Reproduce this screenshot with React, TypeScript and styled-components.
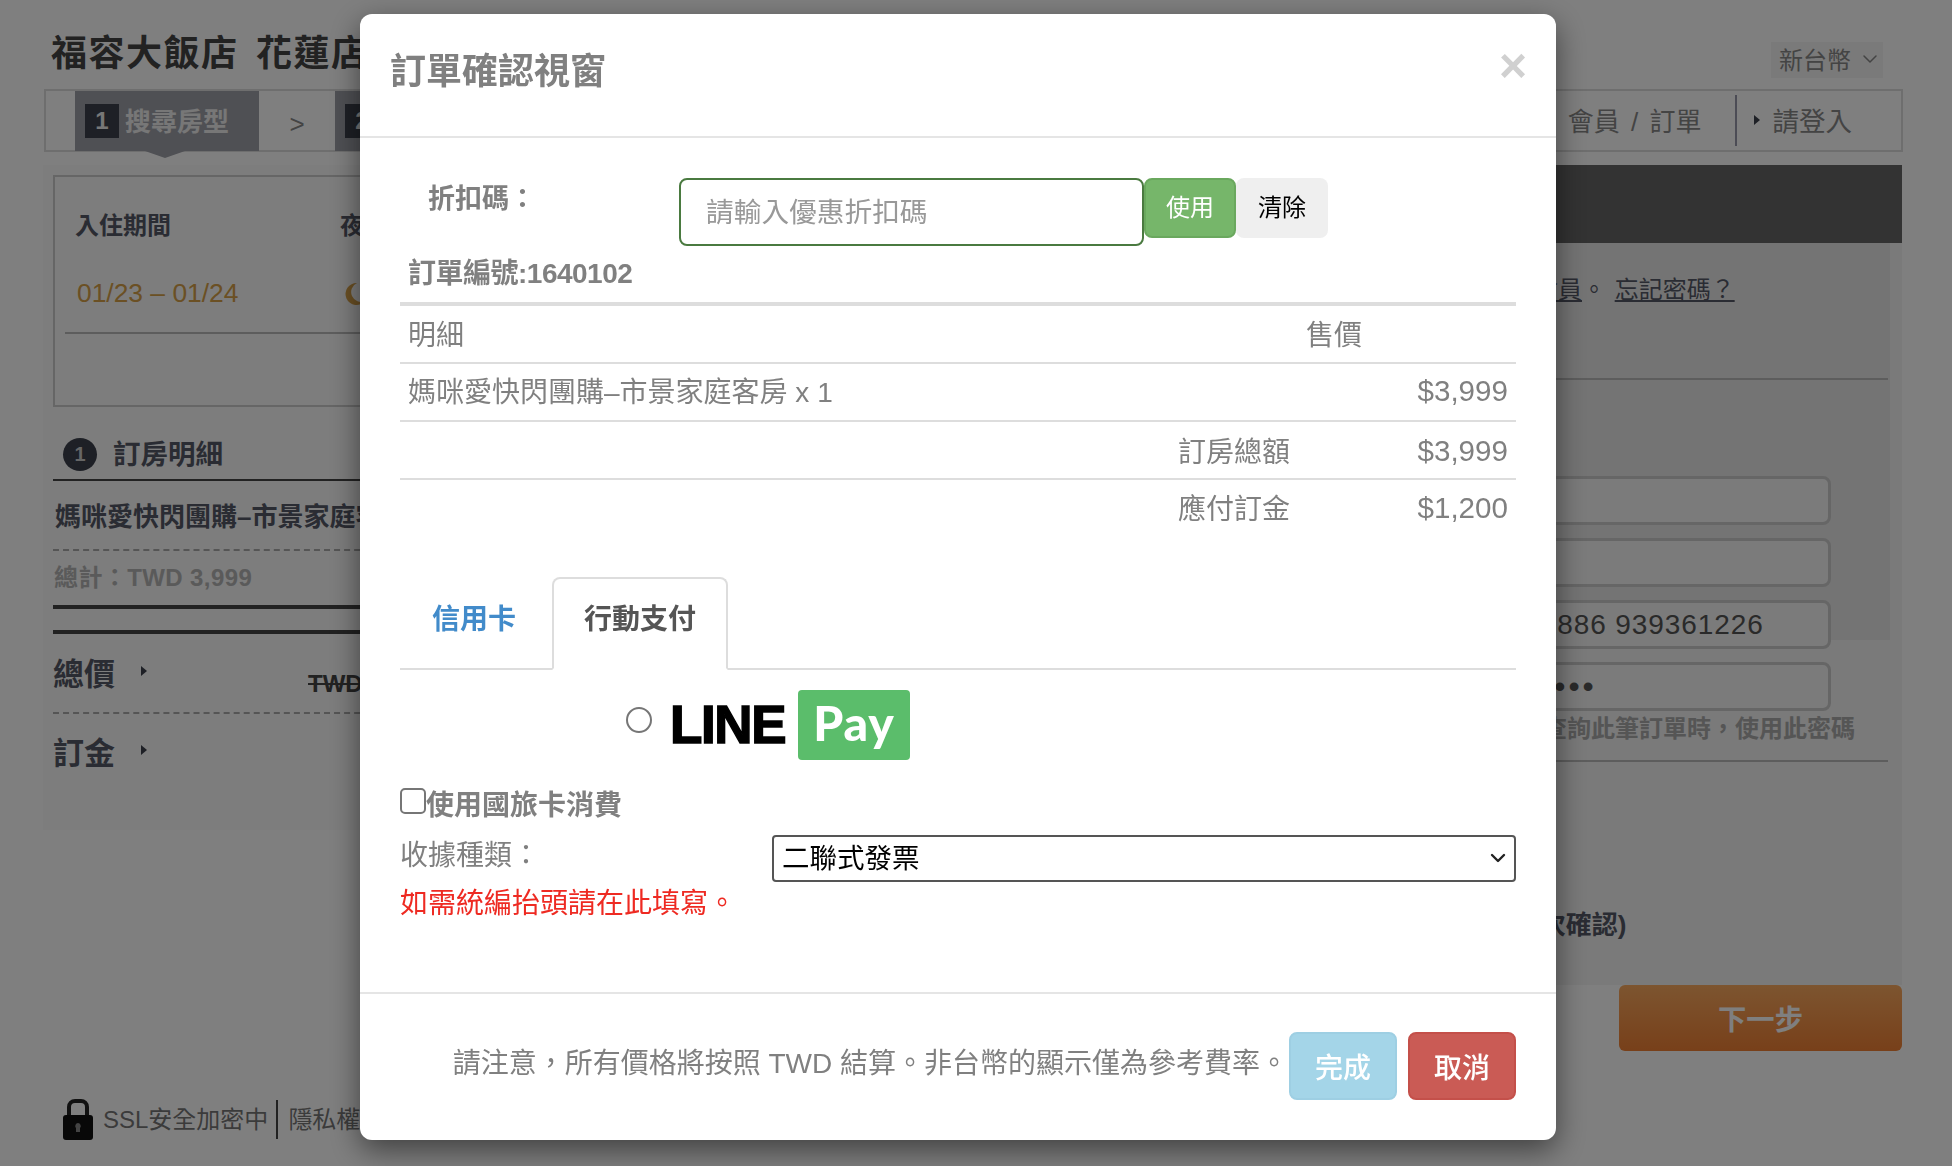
import * as React from 'react';
import styled, { createGlobalStyle } from 'styled-components';
import { ChevronDown } from 'lucide-react';

const FONT = '"Liberation Sans", "Noto Sans CJK TC", sans-serif';

const GlobalStyle = createGlobalStyle`
  html, body {
    margin: 0;
    padding: 0;
    height: 1166px;
    overflow: hidden;
    background: #fff;
    font-family: ${FONT};
  }
  * {
    box-sizing: border-box;
  }
`;

/* page behind the dialog */
const Page = styled.div`
  width: 1952px;
  height: 1166px;
  padding: 0 49px 0 44px;
  color: #555866;
`;

const TitleRow = styled.div`
  display: flex;
  justify-content: space-between;
  align-items: flex-start;
  height: 89px;
  padding: 33px 20px 0 7px;
`;

const HotelTitle = styled.h1`
  margin: 0;
  font-size: 36px;
  line-height: 42px;
  font-weight: 700;
  letter-spacing: 1.5px;
  word-spacing: 6px;
  color: #444;
`;

const Currency = styled.div`
  display: flex;
  align-items: center;
  gap: 7px;
  width: 112px;
  height: 36px;
  margin-top: 9px;
  padding: 0 0 3px 8px;
  background: #f4f4f4;
  color: #888;
  font-size: 24px;
`;

const StepBar = styled.div`
  display: flex;
  justify-content: space-between;
  height: 63px;
  border: 2px solid #ddd;
  padding-left: 29px;
`;

const Steps = styled.div`
  display: flex;
`;

const Step = styled.div`
  position: relative;
  display: flex;
  align-items: center;
  gap: 6px;
  width: 184px;
  height: 60px;
  padding-left: 10px;
  background: #9ea0a8;
  color: #eee;
  font-size: 26px;
  font-weight: 700;

  &:first-child::after {
    content: '';
    position: absolute;
    left: 70px;
    top: 60px;
    border-left: 20px solid transparent;
    border-right: 20px solid transparent;
    border-top: 7px solid #9ea0a8;
  }
`;

const StepNo = styled.span`
  display: flex;
  align-items: center;
  justify-content: center;
  width: 34px;
  height: 34px;
  background: #3c404c;
  color: #eee;
  font-size: 24px;
`;

const StepText = styled.span`
  margin-top: -3px;
`;

const StepArrow = styled.span`
  width: 76px;
  padding-top: 18px;
  text-align: center;
  font-size: 26px;
  color: #888;
`;

const NavLinks = styled.div`
  display: flex;
  align-items: center;
  color: #888;
  font-size: 26px;
`;

const NavLink = styled.span`
  display: flex;
  align-items: center;
  height: 51px;
  padding: 0 33px 2px 0;
  word-spacing: 4px;
`;

const NavLogin = styled(NavLink)`
  gap: 13px;
  padding: 0 49px 2px 17px;
  border-left: 2px solid #99a;
  font-size: 26.5px;
`;

const Arrow = styled.i`
  display: block;
  width: 0;
  height: 0;
  border-top: 5px solid transparent;
  border-bottom: 5px solid transparent;
  border-left: 6px solid #3c404c;
`;

const Columns = styled.div`
  display: grid;
  grid-template-columns: 1100px 759px;
  margin-top: 13px;
  margin-left: -1px;
`;

const LeftPanel = styled.div`
  height: 665px;
  padding: 10px 0 0 10px;
  background: #fafafa;
`;

const StayBox = styled.div`
  height: 232px;
  padding: 28px 0 0 10px;
  border: 2px solid #ccc;
`;

const StayGrid = styled.div`
  display: grid;
  grid-template-columns: 265px 1fr;
  grid-auto-rows: 54px;
  padding: 1px 0 18px 10px;
  border-bottom: 2px solid #bbb;
`;

const StayLabel = styled.div`
  font-size: 24px;
  line-height: 40px;
  font-weight: 700;
`;

const StayValue = styled.div`
  display: flex;
  gap: 6px;
  padding: 13px 0 0 2px;
  font-size: 26.4px;
  line-height: 40px;
  color: #d6a048;

  svg {
    margin-top: 8px;
  }
`;

const Details = styled.div`
  margin-top: 30px;
`;

const DetailsHead = styled.div`
  display: flex;
  align-items: center;
  gap: 16px;
  height: 44px;
  padding: 0 0 12px 10px;
  border-bottom: 2px solid #444;
  font-size: 27.5px;
  font-weight: 700;
`;

const RoundNo = styled.span`
  display: flex;
  align-items: center;
  justify-content: center;
  width: 34px;
  height: 33px;
  margin-top: 5px;
  border-radius: 50%;
  background: #3c404c;
  color: #ccc;
  font-size: 20px;
`;

const RoomName = styled.div`
  height: 70px;
  padding-left: 2px;
  border-bottom: 2px dashed #aaa;
  font-size: 26px;
  line-height: 72px;
  font-weight: 700;
  white-space: nowrap;
`;

const RoomTotal = styled.div`
  height: 58px;
  border-bottom: 4px solid #444;
  font-size: 24px;
  line-height: 54px;
  font-weight: 700;
  letter-spacing: 0.4px;
  color: #b4b4b4;
  padding-left: 1px;
`;

const PriceHead = styled.div`
  margin-top: 21px;
  border-top: 4px solid #444;
`;

const PriceRow = styled.div<{ $dashed?: boolean }>`
  display: flex;
  align-items: center;
  height: 80px;
  padding-bottom: ${p => (p.$dashed ? '4px' : '8px')};
  border-bottom: ${p => (p.$dashed ? '2px dashed #aaa' : 'none')};
  font-size: 31px;
  font-weight: 700;
`;

const PriceArrow = styled(Arrow)`
  margin-left: 26px;
`;

const OldPrice = styled.s`
  margin: 26px 0 0 161px;
  font-size: 24px;
  color: #444;
`;

const RightColumn = styled.div`
  display: flex;
  flex-direction: column;
`;

const DarkBar = styled.div`
  height: 78px;
  background: #666;
`;

const LoginPanel = styled.div`
  height: 742px;
  padding: 27px 14px 0 386px;
  background:
    linear-gradient(#e9e9e9, #e9e9e9) no-repeat left top / calc(100% - 12px) 397px,
    #f4f4f4;
  font-size: 24px;
  color: #555866;
`;

const LoginHint = styled.div`
  margin-left: -45px;
  padding-bottom: 68px;
  line-height: 40px;
  border-bottom: 2px solid #bbb;
  white-space: nowrap;

  u {
    margin-left: 2px;
  }
`;

const LoginFields = styled.div`
  display: grid;
  gap: 13px;
  width: 302px;
  margin-top: 96px;
`;

const LoginInput = styled.input`
  height: 49px;
  width: 100%;
  padding: 0 0 0 8px;
  border: 3px solid #ccc;
  border-radius: 8px;
  background: #f6f6f6;
  font-family: ${FONT};
  font-size: 28px;
  letter-spacing: 0.9px;
  color: #555;

  &[type='password'] {
    font-size: 32px;
    letter-spacing: 3px;
  }
`;

const LoginNote = styled.div`
  height: 51px;
  padding-left: 14px;
  border-bottom: 2px solid #bbb;
  font-size: 24px;
  line-height: 36px;
  font-weight: 700;
  color: #aaa;
  white-space: nowrap;
`;

const ConfirmNote = styled.div`
  margin: 143px 0 0 -50px;
  font-size: 26px;
  line-height: 40px;
  font-weight: 700;
  white-space: nowrap;
`;

const NextButton = styled.div`
  align-self: flex-end;
  width: 283px;
  height: 66px;
  border-radius: 6px;
  background: linear-gradient(#faaa60, #f08034);
  color: #fff;
  font-size: 28.3px;
  font-weight: 700;
  line-height: 70px;
  text-align: center;
`;

const FootRow = styled.div`
  display: flex;
  align-items: center;
  margin-top: 46px;
  padding-left: 19px;
  color: #777;
  font-size: 24px;
`;

const LockIcon = styled.svg`
  width: 30px;
  height: 44px;
  margin-right: 10px;
`;

const FootLink = styled.span`
  padding: 0 8px 4px 0;

  & + & {
    padding-left: 10px;
    border-left: 2px solid #444;
  }
`;

/* dialog */
const Backdrop = styled.div`
  position: fixed;
  inset: 0;
  background: rgba(0, 0, 0, 0.5);
`;

const Dialog = styled.div`
  display: flex;
  flex-direction: column;
  width: 1196px;
  height: 1126px;
  margin: 14px 0 0 360px;
  border-radius: 12px;
  background: #fff;
  box-shadow: 0 10px 30px rgba(0, 0, 0, 0.5);
  color: #808080;
  font-size: 28px;
`;

const DialogHeader = styled.div`
  display: flex;
  justify-content: space-between;
  height: 124px;
  padding: 32px 29px 0 30px;
  border-bottom: 2px solid #e5e5e5;
`;

const DialogTitle = styled.h4`
  margin: 0;
  font-size: 36px;
  line-height: 52px;
  font-weight: 700;
`;

const CloseButton = styled.span`
  margin-top: -6px;
  font-size: 48px;
  line-height: 52px;
  font-weight: 700;
  color: #d0d0d0;
`;

const DialogBody = styled.div`
  flex: 1;
  padding: 40px 40px 0;
`;

const CouponRow = styled.div`
  display: flex;
  align-items: flex-start;
  height: 68px;
`;

const CouponLabel = styled.div`
  width: 279px;
  padding: 1px 0 0 28px;
  font-size: 27px;
  line-height: 40px;
  font-weight: 700;
`;

const CouponInput = styled.input`
  width: 465px;
  height: 68px;
  padding: 2px 25px 0;
  border: 2px solid #4a7a40;
  border-radius: 8px;
  outline: none;
  font-family: ${FONT};
  font-size: 27.7px;

  &::placeholder {
    color: #999;
  }
`;

const CouponButton = styled.button<{ $apply?: boolean }>`
  width: 92px;
  height: 60px;
  padding: 0 0 5px;
  border: ${p => (p.$apply ? '2px solid #6aa85e' : 'none')};
  border-radius: 8px;
  background: ${p => (p.$apply ? '#76b66a' : '#efefef')};
  color: ${p => (p.$apply ? '#fff' : '#000')};
  font-family: ${FONT};
  font-size: 24px;
`;

const OrderNo = styled.div`
  height: 56px;
  padding-left: 8px;
  font-size: 28px;
  line-height: 56px;
  font-weight: 700;
  letter-spacing: -0.5px;
`;

const SummaryTable = styled.table`
  width: 100%;
  margin-bottom: 40px;
  border-collapse: collapse;
  border-top: 4px solid #ddd;

  th,
  td {
    height: 58px;
    padding: 0 8px;
    border-top: 2px solid #ddd;
    font-size: 28px;
    font-weight: 400;
    text-align: left;
    white-space: nowrap;
  }

  tr:first-child th {
    height: 59px;
    padding-bottom: 2px;
    border-top: none;
  }

  tr:nth-child(2n) td {
    padding-bottom: 4px;
  }
`;

const TotalHeadCell = styled.th`
  width: 128px;
`;

const PriceHeadCell = styled.th`
  width: 218px;
`;

const AmountCell = styled.td`
  && {
    padding-top: 2px;
    font-size: 29.6px;
    text-align: right;
  }
`;

const Tabs = styled.div`
  display: flex;
  align-items: flex-end;
  height: 93px;
  border-bottom: 2px solid #ddd;
`;

const Tab = styled.div<{ $active?: boolean }>`
  height: ${p => (p.$active ? '93px' : '91px')};
  margin: 0 ${p => (p.$active ? '0' : '4px')} ${p => (p.$active ? '-2px' : '0')} 0;
  padding: 21px 30px 0;
  border: 2px solid ${p => (p.$active ? '#ddd' : 'transparent')};
  border-bottom-color: ${p => (p.$active ? '#fff' : 'transparent')};
  border-radius: 8px 8px 0 0;
  background: #fff;
  color: ${p => (p.$active ? '#555' : '#428bca')};
  font-size: 28px;
  line-height: 40px;
  font-weight: 700;
`;

const PayRow = styled.label`
  display: flex;
  align-items: center;
  gap: 18px;
  height: 70px;
  margin: 20px 0 30px;
  padding-left: 226px;
`;

const Radio = styled.input`
  appearance: none;
  flex: none;
  width: 26px;
  height: 26px;
  margin: -10px 0 0;
  border: 2px solid #767676;
  border-radius: 50%;
  background: #fff;
`;

const LineLogo = styled.span`
  display: flex;
  align-items: center;
  gap: 13px;
`;

const LineWord = styled.span`
  width: 115px;
  font-size: 53px;
  line-height: 70px;
  font-weight: 700;
  letter-spacing: -1.4px;
  color: #000;
  -webkit-text-stroke: 1.5px #000;
  white-space: nowrap;
`;

const PayWord = styled.span`
  width: 112px;
  height: 70px;
  border-radius: 4px;
  background: #5bbd6b;
  color: #fff;
  font-family: Lato, sans-serif;
  font-size: 48px;
  line-height: 66px;
  font-weight: 900;
  letter-spacing: 1px;
  text-align: center;
`;

const TravelCard = styled.label`
  display: flex;
  align-items: center;
  height: 32px;
  font-weight: 700;
  line-height: 32px;
`;

const Checkbox = styled.input`
  appearance: none;
  flex: none;
  width: 26px;
  height: 26px;
  margin: -11px 0 0;
  border: 2px solid #767676;
  border-radius: 5px;
  background: #fff;
`;

const ReceiptRow = styled.div`
  display: flex;
  margin-top: 13px;
`;

const ReceiptLabel = styled.div`
  width: 372px;
  padding-top: 1px;
  line-height: 40px;
`;

const SelectWrap = styled.div`
  position: relative;
  flex: 1;

  svg {
    position: absolute;
    right: 6px;
    top: 11px;
    color: #222;
    pointer-events: none;
  }
`;

const ReceiptSelect = styled.select`
  appearance: none;
  display: block;
  width: 100%;
  height: 47px;
  padding: 0 8px;
  border: 2px solid #555;
  border-radius: 4px;
  background: #fff;
  color: #000;
  font-family: ${FONT};
  font-size: 27.5px;
`;

const RedNote = styled.div`
  margin-top: 2px;
  color: #ee2a22;
  line-height: 40px;
`;

const DialogFooter = styled.div`
  display: flex;
  justify-content: flex-end;
  align-items: center;
  height: 148px;
  padding: 38px 40px 40px 0;
  border-top: 2px solid #e5e5e5;
`;

const FooterNote = styled.span`
  margin: -10px 1px 0 0;
  white-space: pre;
`;

const FooterButton = styled.button<{ $color: string; $edge: string }>`
  width: 108px;
  height: 68px;
  border: 2px solid ${p => p.$edge};
  border-radius: 8px;
  background: ${p => p.$color};
  color: #fff;
  font-family: ${FONT};
  font-size: 28px;
  font-weight: 500;

  & + & {
    margin-left: 11px;
  }
`;

const StayMoon = () => (
  <svg width="24" height="24" viewBox="0 0 24 24">
    <path d="M15 2a11 11 0 1 0 8 18A9 9 0 0 1 15 2z" fill="#d6a048" />
  </svg>
);

const Lock = () => (
  <LockIcon viewBox="0 0 30 44">
    <path d="M6 20V10a6 6 0 0 1 6-6h6a6 6 0 0 1 6 6v10" fill="none" stroke="#222" strokeWidth="4" />
    <rect x="0" y="18" width="30" height="25" rx="3" fill="#111" />
    <path d="M15 26a3 3 0 0 1 2 5v4h-4v-4a3 3 0 0 1 2-5z" fill="#888" />
  </LockIcon>
);

export default function App() {
  return (
    <>
      <GlobalStyle />
      <Page>
        <TitleRow>
          <HotelTitle>福容大飯店 花蓮店</HotelTitle>
          <Currency>
            新台幣
            <ChevronDown size={24} strokeWidth={1.5} />
          </Currency>
        </TitleRow>
        <StepBar>
          <Steps>
            <Step>
              <StepNo>1</StepNo>
              <StepText>搜尋房型</StepText>
            </Step>
            <StepArrow>&gt;</StepArrow>
            <Step>
              <StepNo>2</StepNo>
              <StepText>填寫資料</StepText>
            </Step>
          </Steps>
          <NavLinks>
            <NavLink>會員 / 訂單</NavLink>
            <NavLogin>
              <Arrow />
              請登入
            </NavLogin>
          </NavLinks>
        </StepBar>
        <Columns>
          <LeftPanel>
            <StayBox>
              <StayGrid>
                <StayLabel>入住期間</StayLabel>
                <StayLabel>夜數</StayLabel>
                <StayValue>01/23 – 01/24</StayValue>
                <StayValue>
                  <StayMoon />1
                </StayValue>
              </StayGrid>
            </StayBox>
            <Details>
              <DetailsHead>
                <RoundNo>1</RoundNo>
                訂房明細
              </DetailsHead>
              <RoomName>媽咪愛快閃團購–市景家庭客房</RoomName>
              <RoomTotal>總計：TWD 3,999</RoomTotal>
              <PriceHead />
              <PriceRow $dashed>
                總價
                <PriceArrow />
                <OldPrice>TWD 3,999</OldPrice>
              </PriceRow>
              <PriceRow>
                訂金
                <PriceArrow />
              </PriceRow>
            </Details>
          </LeftPanel>
          <RightColumn>
            <DarkBar />
            <LoginPanel>
              <LoginHint>
                <u>加入會員</u>。 <u>忘記密碼？</u>
              </LoginHint>
              <LoginFields>
                <LoginInput readOnly />
                <LoginInput readOnly />
                <LoginInput readOnly value="+886 939361226" />
                <LoginInput readOnly type="password" value="1234" />
              </LoginFields>
              <LoginNote>查詢此筆訂單時，使用此密碼</LoginNote>
              <ConfirmNote>(請再次確認)</ConfirmNote>
            </LoginPanel>
            <NextButton>下一步</NextButton>
          </RightColumn>
        </Columns>
        <FootRow>
          <Lock />
          <FootLink>SSL安全加密中</FootLink>
          <FootLink>隱私權政策</FootLink>
        </FootRow>
      </Page>

      <Backdrop>
        <Dialog>
          <DialogHeader>
            <DialogTitle>訂單確認視窗</DialogTitle>
            <CloseButton>×</CloseButton>
          </DialogHeader>
          <DialogBody>
            <CouponRow>
              <CouponLabel>折扣碼：</CouponLabel>
              <CouponInput placeholder="請輸入優惠折扣碼" />
              <CouponButton $apply>使用</CouponButton>
              <CouponButton>清除</CouponButton>
            </CouponRow>
            <OrderNo>訂單編號:1640102</OrderNo>
            <SummaryTable>
              <tbody>
                <tr>
                  <th>明細</th>
                  <TotalHeadCell />
                  <PriceHeadCell>售價</PriceHeadCell>
                </tr>
                <tr>
                  <td>媽咪愛快閃團購–市景家庭客房 x 1</td>
                  <td />
                  <AmountCell>$3,999</AmountCell>
                </tr>
                <tr>
                  <td />
                  <td>訂房總額</td>
                  <AmountCell>$3,999</AmountCell>
                </tr>
                <tr>
                  <td />
                  <td>應付訂金</td>
                  <AmountCell>$1,200</AmountCell>
                </tr>
              </tbody>
            </SummaryTable>
            <Tabs>
              <Tab>信用卡</Tab>
              <Tab $active>行動支付</Tab>
            </Tabs>
            <PayRow>
              <Radio type="radio" name="pay" />
              <LineLogo>
                <LineWord>LINE</LineWord>
                <PayWord>Pay</PayWord>
              </LineLogo>
            </PayRow>
            <TravelCard>
              <Checkbox type="checkbox" />
              使用國旅卡消費
            </TravelCard>
            <ReceiptRow>
              <ReceiptLabel>收據種類：</ReceiptLabel>
              <SelectWrap>
                <ReceiptSelect defaultValue="two">
                  <option value="two">二聯式發票</option>
                  <option value="three">三聯式發票</option>
                </ReceiptSelect>
                <ChevronDown size={24} strokeWidth={2.4} />
              </SelectWrap>
            </ReceiptRow>
            <RedNote>如需統編抬頭請在此填寫。</RedNote>
          </DialogBody>
          <DialogFooter>
            <FooterNote>請注意，所有價格將按照 TWD 結算。非台幣的顯示僅為參考費率。</FooterNote>
            <FooterButton $color="#a4d5e8" $edge="#9ecfe3">
              完成
            </FooterButton>
            <FooterButton $color="#ca5b55" $edge="#c4504a">
              取消
            </FooterButton>
          </DialogFooter>
        </Dialog>
      </Backdrop>
    </>
  );
}
